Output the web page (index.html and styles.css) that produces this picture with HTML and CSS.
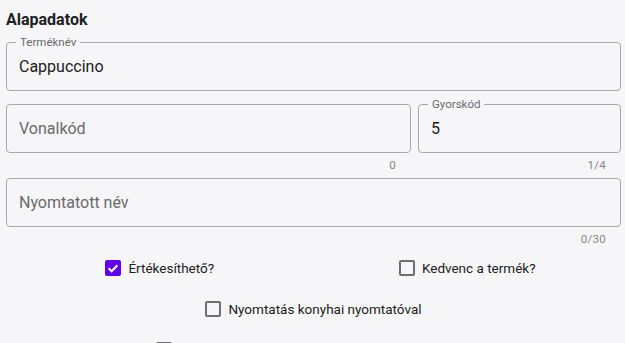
FILE: index.html
```html
<!DOCTYPE html>
<html lang="hu">
<head>
<meta charset="utf-8">
<link rel="stylesheet" href="styles.css">
</head>
<body>
<div class="page">
  <h2 class="title">Alapadatok</h2>

  <div class="field gap-after">
    <div class="box">
      <span class="float-label">Terméknév</span>
      <span class="value">Cappuccino</span>
    </div>
  </div>

  <div class="row2">
    <div class="field">
      <div class="box">
        <span class="placeholder">Vonalkód</span>
      </div>
      <div class="counter">0</div>
    </div>
    <div class="field">
      <div class="box">
        <span class="float-label">Gyorskód</span>
        <span class="value">5</span>
      </div>
      <div class="counter">1/4</div>
    </div>
  </div>

  <div class="field">
    <div class="box">
      <span class="placeholder">Nyomtatott név</span>
    </div>
    <div class="counter">0/30</div>
  </div>

  <div class="checks two">
    <label class="check"><span class="cb checked"><svg viewBox="0 0 16 16" width="16" height="16"><path d="M3.6 8.2l3 3 5.8-6" fill="none" stroke="#fff" stroke-width="2"/></svg></span><span>Értékesíthető?</span></label>
    <label class="check"><span class="cb"></span><span>Kedvenc a termék?</span></label>
  </div>
  <div class="checks one">
    <label class="check"><span class="cb"></span><span>Nyomtatás konyhai nyomtatóval</span></label>
  </div>
  <div class="checks one">
    <label class="check"><span class="cb"></span><span>Mennyiség bekérése eladáskor a kasszagépen is</span></label>
  </div>
</div>
</body>
</html>
```

FILE: styles.css
```css
html, body {
  margin: 0;
  padding: 0;
  background: #f6f6f8;
  overflow: hidden;
}
body {
  font-family: Roboto, "Noto Sans", sans-serif;
  color: #1d1b20;
}
.page {
  padding: 0 4px 0 6px;
}
.title {
  margin: 0;
  padding-top: 10px;
  font-size: 16px;
  line-height: 20px;
  font-weight: 700;
  color: #202020;
  height: 32px;
}
.field.gap-after {
  margin-bottom: 13px;
}
.box {
  position: relative;
  height: 47px;
  border: 1px solid #a9a9ab;
  border-radius: 4px;
  display: flex;
  align-items: center;
  padding: 0 12px;
}
.float-label {
  position: absolute;
  left: 9px;
  top: -8px;
  padding: 0 4px;
  background: #f6f6f8;
  font-size: 11.5px;
  line-height: 14px;
  color: #6a6a6e;
}
.value {
  font-size: 16px;
  color: #1d1b20;
}
.placeholder {
  font-size: 16px;
  color: #6a696e;
}
.row2 {
  display: grid;
  grid-template-columns: 405px 1fr;
  column-gap: 7px;
}
.counter {
  height: 25px;
  line-height: 24px;
  text-align: right;
  padding-right: 15px;
  font-size: 11.5px;
  color: #86858a;
  letter-spacing: 0.3px;
}
.checks {
  display: grid;
  height: 41px;
  align-items: center;
}
.checks.two {
  grid-template-columns: 1fr 1fr;
  justify-items: center;
  margin-top: -5px;
}
.checks.one {
  justify-items: center;
}
.check {
  display: flex;
  align-items: center;
  gap: 7px;
  font-size: 13.5px;
  color: #1d1b20;
}
.cb {
  box-sizing: border-box;
  width: 16px;
  height: 16px;
  border: 2px solid #6e6d72;
  border-radius: 2px;
  display: flex;
  align-items: center;
  justify-content: center;
}
.cb.checked {
  background: #6200ee;
  border-color: #6200ee;
}
.cb svg {
  display: block;
  margin: -2px;
}
```
